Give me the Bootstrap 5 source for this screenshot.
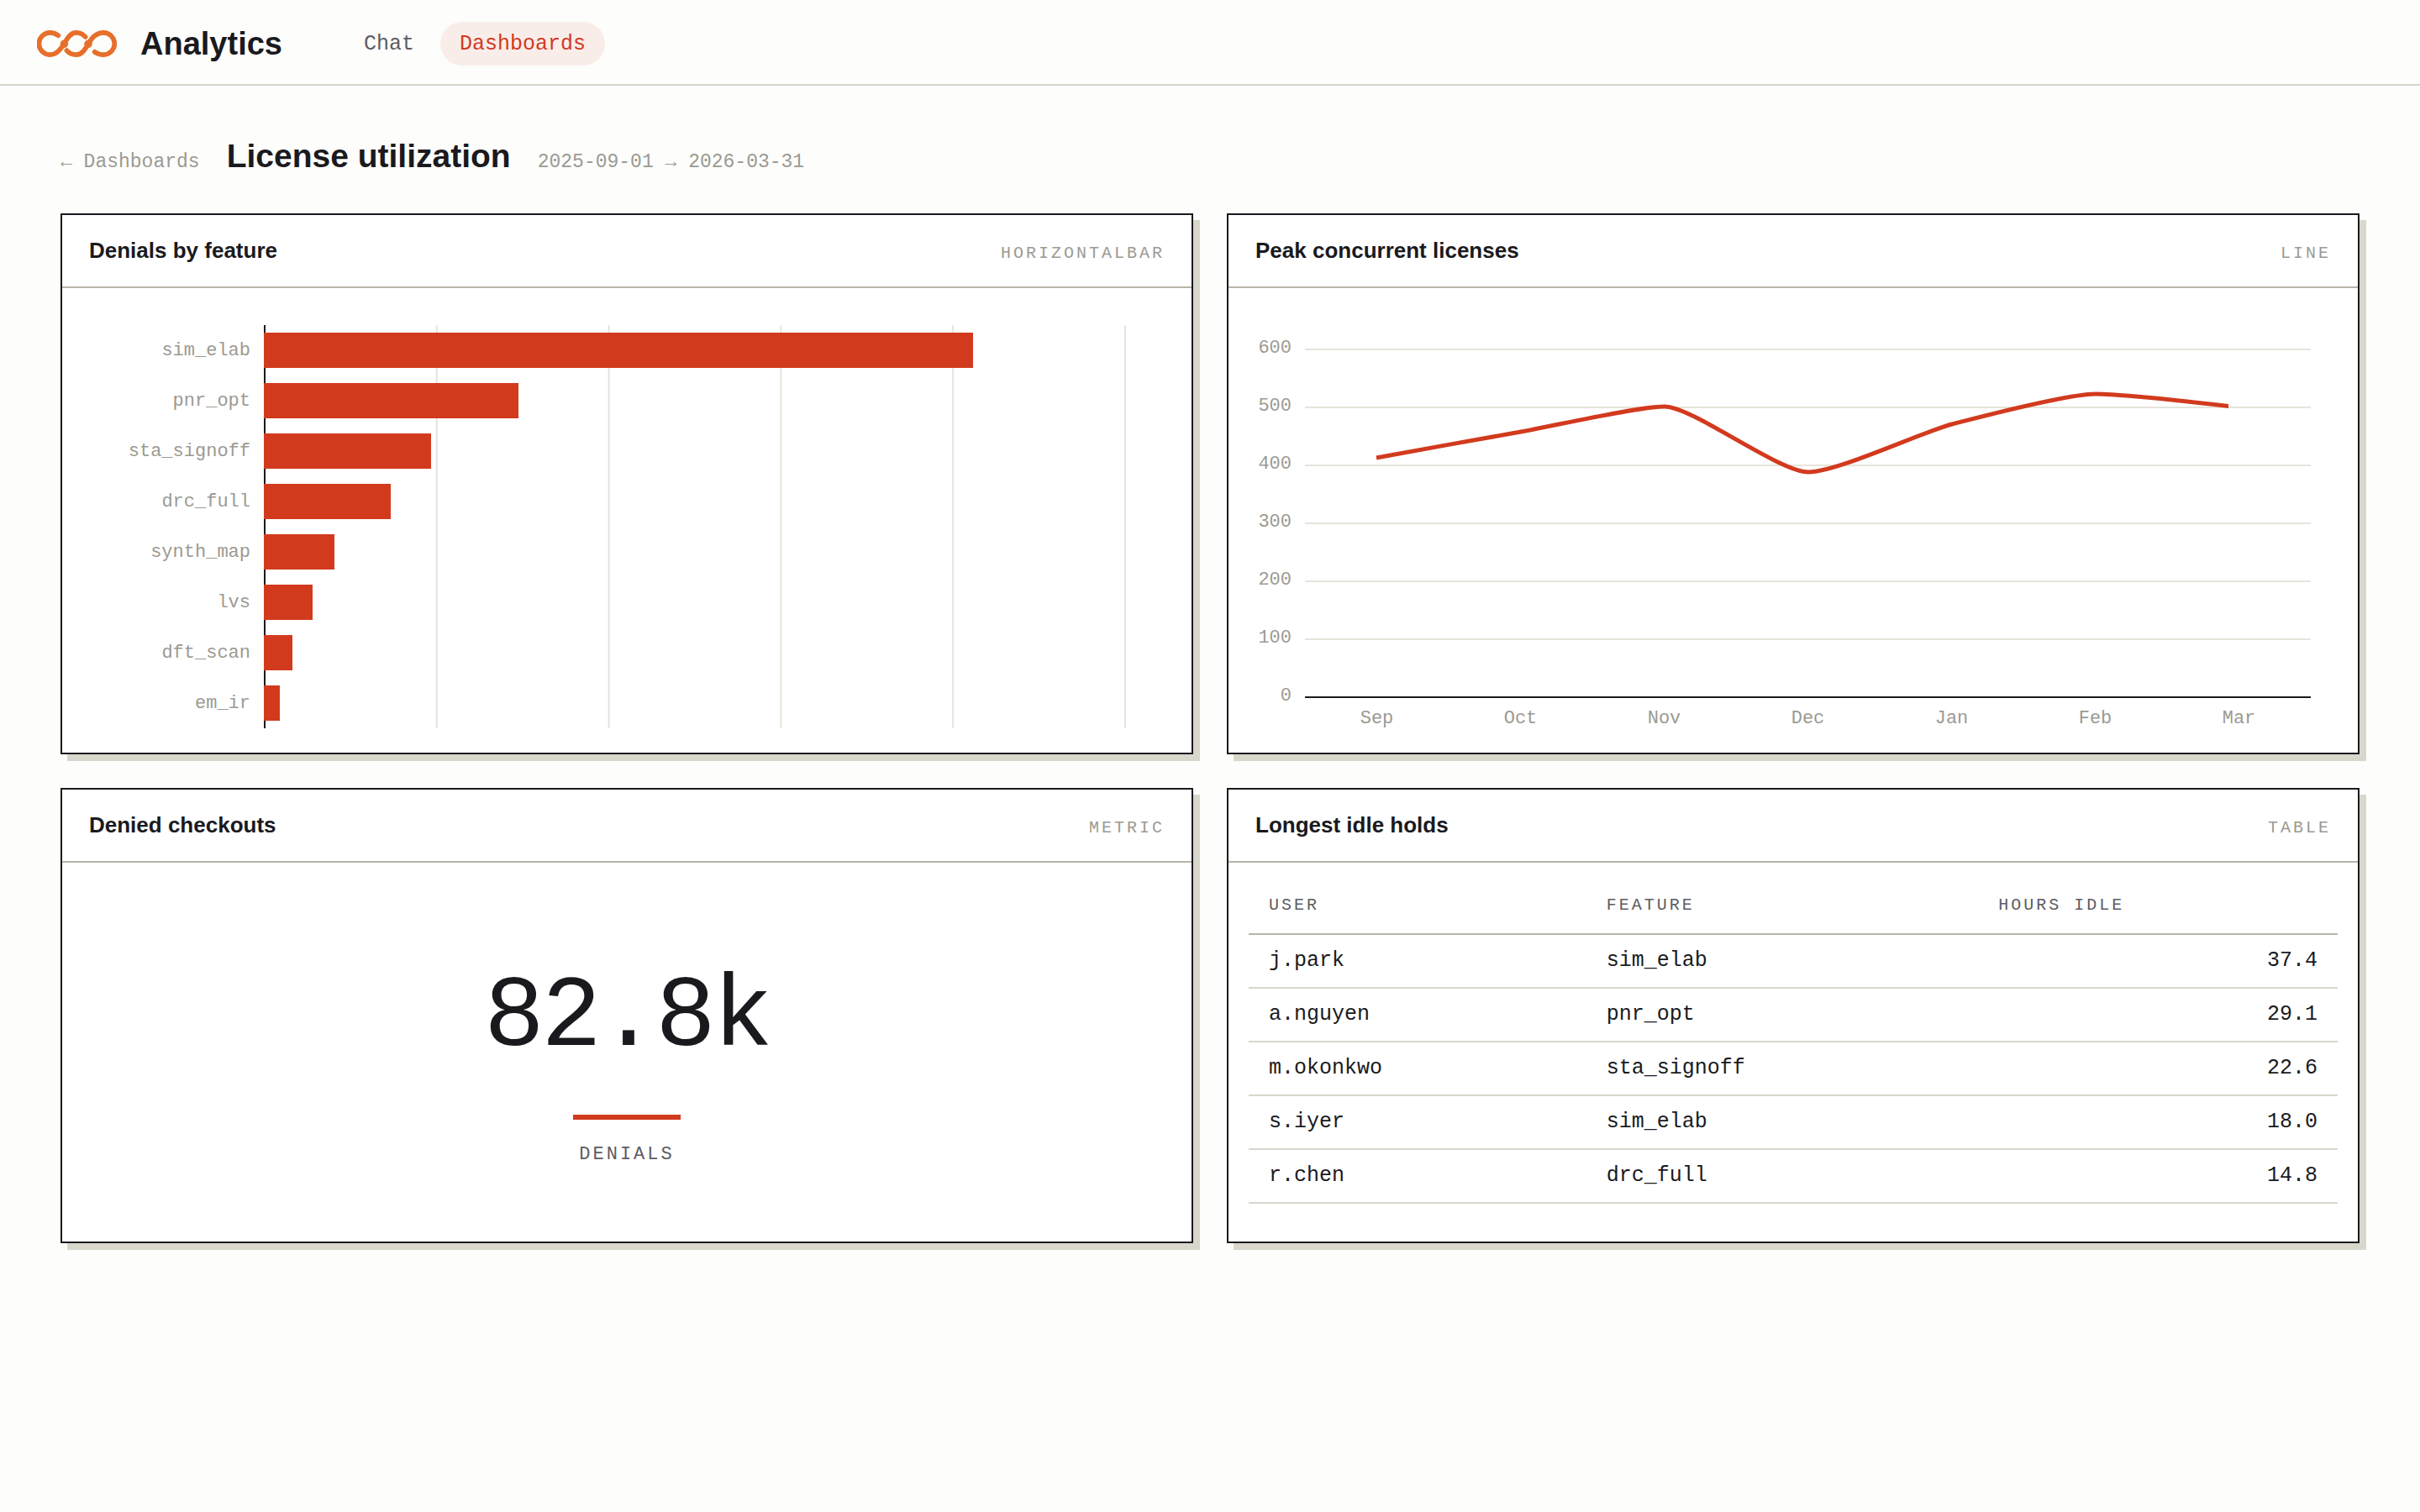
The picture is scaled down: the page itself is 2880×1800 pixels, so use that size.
<!DOCTYPE html>
<html lang="en">
<head>
<meta charset="utf-8">
<meta name="viewport" content="width=device-width, initial-scale=1">
<title>License utilization – Analytics</title>
<link rel="stylesheet" href="https://cdn.jsdelivr.net/npm/bootstrap@5.3.0/dist/css/bootstrap.min.css">
<style>
  :root {
    --ink: #1a1a1e;
    --soft: #5c5c62;
    --faint: #9b9a92;
    --line: #d9d6cc;
    --line-strong: #b8b5a7;
    --grid: #e6e4da;
    --accent: #d23a1e;
    --mono: "Liberation Mono", monospace;
  }
  body { background: #fdfdfb; color: var(--ink); font-family: "Liberation Sans", Arial, sans-serif; }
  .mono { font-family: var(--mono); }

  .topbar { border-bottom: 2px solid var(--line); padding: 4px 44px 0; min-height: 102px; }
  .brand { gap: 28px; color: var(--ink); font-size: 38px; line-height: 48px; font-weight: 700; }
  .brand svg { width: 95px; height: 32px; }
  .topnav { gap: 8px; margin-left: 74px; }
  .topnav .nav-link { font-size: 25px; line-height: 32px; padding: 11px 23px 9px; border-radius: 26px; color: var(--soft); }
  .topnav .nav-link.active { color: var(--accent); background: #f9edea; }

  .page { padding: 60px 72px; }
  .page-head { gap: 32px; margin-bottom: 44px; }
  .page-head h1 { font-size: 39px; line-height: 48px; font-weight: 700; }
  .page-head .aside { font-size: 23px; line-height: 32px; color: var(--faint); }

  .tiles { --bs-gutter-x: 40px; --bs-gutter-y: 40px; }
  .tile { background: #fff; border: 2px solid var(--ink); box-shadow: 8px 8px 0 var(--line); }
  .tile-head { padding: 27px 32px 24px; border-bottom: 2px solid var(--line-strong); }
  .tile-head h2 { font-size: 26px; line-height: 31px; font-weight: 700; }
  .tile-head .kind { font-size: 20px; line-height: 31px; letter-spacing: 3px; color: var(--faint); text-transform: uppercase; }

  .bars { padding: 44px 78px 29px 0; }
  .bar-row { height: 60px; gap: 16px; }
  .bar-label { width: 224px; font-size: 22px; color: var(--faint); }
  .bar-track { border-left: 2px solid var(--ink); background: linear-gradient(to left, var(--grid) 2px, transparent 2px) 0 0 / 20% 100%; }
  .bar-fill { height: 42px; margin-left: -2px; background: var(--accent); }

  .trend { padding: 37px 56px 15px 0; gap: 16px; color: var(--faint); font-size: 22px; }
  .trend-scale { width: 75px; line-height: 69px; }
  .trend-plot { padding-top: 35px; }
  .trend-plot svg { height: 416px; }
  .trend-months { line-height: 50px; }

  .metric { line-height: 30px; }
  .metric-value { font-size: 120px; line-height: 194px; letter-spacing: -4px; }
  .metric-rule { width: 128px; height: 6px; margin: 18px 0 27px; background: var(--accent); }
  .metric-name { font-size: 22px; letter-spacing: 3px; color: var(--soft); text-transform: uppercase; }

  .holds-wrap { padding: 24px 24px 45px; }
  .holds { font-size: 25px; line-height: 30px; color: var(--ink); }
  .holds th { font-size: 20px; font-weight: 400; letter-spacing: 3px; text-transform: uppercase; color: var(--soft); padding: 12px 24px 18px; border-bottom: 2px solid var(--line-strong); }
  .holds td { padding: 16px 24px; border-bottom: 2px solid var(--line); }
  .col-user { width: 31%; }
  .col-feature { width: 36%; }
</style>
</head>
<body>
<header class="topbar d-flex align-items-center">
  <a class="brand d-flex align-items-center text-decoration-none" href="#">
    <svg viewBox="0 0 282 94" fill="none" stroke="#e66f2c" stroke-width="17" stroke-linecap="round" aria-hidden="true">
      <path d="M75 18C67 12 57 8 46 8A39 39 0 0 0 46 86C72 86 84 64 96 48C106 28 118 8 139 8C153 8 163 14 171 23"/>
      <path d="M105 71C114 81 126 86 139 86C160 86 170 66 181 48C192 28 208 8 235 8A39 39 0 0 1 235 86C223 86 213 82 204 76"/>
      <g fill="#e66f2c" stroke="none"><circle cx="96" cy="48" r="14"/><circle cx="181" cy="48" r="14"/></g>
    </svg>
    <span>Analytics</span>
  </a>
  <nav class="topnav nav mono">
    <a class="nav-link" href="#">Chat</a>
    <a class="nav-link active" href="#" aria-current="page">Dashboards</a>
  </nav>
</header>

<main class="page">
  <div class="page-head d-flex align-items-baseline">
    <a class="aside mono text-decoration-none" href="#">← Dashboards</a>
    <h1 class="mb-0">License utilization</h1>
    <span class="aside mono">2025-09-01 → 2026-03-31</span>
  </div>

  <div class="tiles row">
    <div class="col-6">
      <section class="tile h-100">
        <div class="tile-head d-flex justify-content-between align-items-baseline">
          <h2 class="mb-0">Denials by feature</h2><span class="kind mono">horizontalbar</span>
        </div>
        <div class="bars mono">
          <div class="bar-row d-flex"><span class="bar-label text-end align-self-center">sim_elab</span><div class="bar-track flex-fill d-flex align-items-center"><div class="bar-fill" style="width:82.4%"></div></div></div>
          <div class="bar-row d-flex"><span class="bar-label text-end align-self-center">pnr_opt</span><div class="bar-track flex-fill d-flex align-items-center"><div class="bar-fill" style="width:29.6%"></div></div></div>
          <div class="bar-row d-flex"><span class="bar-label text-end align-self-center">sta_signoff</span><div class="bar-track flex-fill d-flex align-items-center"><div class="bar-fill" style="width:19.4%"></div></div></div>
          <div class="bar-row d-flex"><span class="bar-label text-end align-self-center">drc_full</span><div class="bar-track flex-fill d-flex align-items-center"><div class="bar-fill" style="width:14.7%"></div></div></div>
          <div class="bar-row d-flex"><span class="bar-label text-end align-self-center">synth_map</span><div class="bar-track flex-fill d-flex align-items-center"><div class="bar-fill" style="width:8.2%"></div></div></div>
          <div class="bar-row d-flex"><span class="bar-label text-end align-self-center">lvs</span><div class="bar-track flex-fill d-flex align-items-center"><div class="bar-fill" style="width:5.7%"></div></div></div>
          <div class="bar-row d-flex"><span class="bar-label text-end align-self-center">dft_scan</span><div class="bar-track flex-fill d-flex align-items-center"><div class="bar-fill" style="width:3.3%"></div></div></div>
          <div class="bar-row d-flex"><span class="bar-label text-end align-self-center">em_ir</span><div class="bar-track flex-fill d-flex align-items-center"><div class="bar-fill" style="width:1.9%"></div></div></div>
        </div>
      </section>
    </div>

    <div class="col-6">
      <section class="tile h-100">
        <div class="tile-head d-flex justify-content-between align-items-baseline">
          <h2 class="mb-0">Peak concurrent licenses</h2><span class="kind mono">line</span>
        </div>
        <div class="trend mono d-flex">
          <div class="trend-scale text-end">
            <div>600</div><div>500</div><div>400</div><div>300</div><div>200</div><div>100</div><div>0</div>
          </div>
          <div class="trend-plot flex-fill">
            <svg class="d-block w-100" viewBox="0 0 1197 416" preserveAspectRatio="none" fill="none" role="img" aria-label="Peak concurrent licenses by month">
              <clipPath id="drawn"><rect width="1099" height="416"/></clipPath>
              <g stroke="#e6e4da" stroke-width="2">
                <path d="M0 1H1197M0 70H1197M0 139H1197M0 208H1197M0 277H1197M0 346H1197"/>
              </g>
              <path d="M0 415H1197" stroke="#1a1a1e" stroke-width="2"/>
              <path clip-path="url(#drawn)" stroke="#d23a1e" stroke-width="5" d="M85 130C85 130 222 105 257 99S395 69 428 69S564 147 599 147S735 99 770 90S907 54 941 54S1112 70 1112 70"/>
            </svg>
            <div class="trend-months d-flex text-center">
              <span class="col">Sep</span><span class="col">Oct</span><span class="col">Nov</span><span class="col">Dec</span><span class="col">Jan</span><span class="col">Feb</span><span class="col">Mar</span>
            </div>
          </div>
        </div>
      </section>
    </div>

    <div class="col-6">
      <section class="tile h-100 d-flex flex-column">
        <div class="tile-head d-flex justify-content-between align-items-baseline">
          <h2 class="mb-0">Denied checkouts</h2><span class="kind mono">metric</span>
        </div>
        <div class="metric mono flex-fill d-flex flex-column align-items-center justify-content-center">
          <div class="metric-value">82.8k</div>
          <div class="metric-rule"></div>
          <div class="metric-name">denials</div>
        </div>
      </section>
    </div>

    <div class="col-6">
      <section class="tile h-100">
        <div class="tile-head d-flex justify-content-between align-items-baseline">
          <h2 class="mb-0">Longest idle holds</h2><span class="kind mono">table</span>
        </div>
        <div class="holds-wrap">
          <table class="holds mono w-100">
            <thead><tr><th class="col-user" scope="col">User</th><th class="col-feature" scope="col">Feature</th><th scope="col">Hours idle</th></tr></thead>
            <tbody>
              <tr><td>j.park</td><td>sim_elab</td><td class="text-end">37.4</td></tr>
              <tr><td>a.nguyen</td><td>pnr_opt</td><td class="text-end">29.1</td></tr>
              <tr><td>m.okonkwo</td><td>sta_signoff</td><td class="text-end">22.6</td></tr>
              <tr><td>s.iyer</td><td>sim_elab</td><td class="text-end">18.0</td></tr>
              <tr><td>r.chen</td><td>drc_full</td><td class="text-end">14.8</td></tr>
            </tbody>
          </table>
        </div>
      </section>
    </div>
  </div>
</main>
<script src="https://cdn.jsdelivr.net/npm/bootstrap@5.3.0/dist/js/bootstrap.bundle.min.js"></script>
</body>
</html>
